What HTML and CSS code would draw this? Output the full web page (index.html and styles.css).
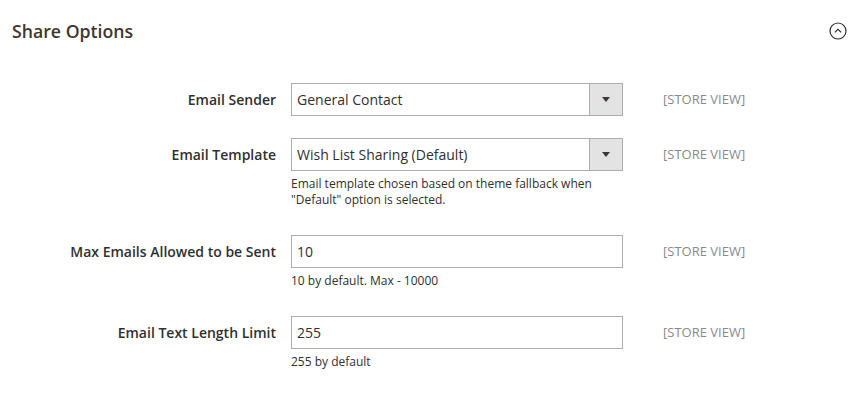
FILE: index.html
```html
<!DOCTYPE html>
<html lang="en">
<head>
    <meta charset="UTF-8">
    <title>Share Options</title>
    <link rel="stylesheet" href="styles.css">
</head>
<body>
    <div class="section">
        <div class="section-title">
            <span>Share Options</span>
            <svg class="toggle" width="18" height="18" viewBox="0 0 18 18">
                <circle cx="9" cy="9" r="8" fill="none" stroke="#303030" stroke-width="1.2"/>
                <path d="M5.8 10.4 L9 7.4 L12.2 10.4" fill="none" stroke="#303030" stroke-width="1.2"/>
            </svg>
        </div>

        <div class="fields">
            <div class="field">
                <label class="label">Email Sender</label>
                <div class="control">
                    <div class="select">
                        <span>General Contact</span>
                        <span class="select-btn"><i class="arrow"></i></span>
                    </div>
                </div>
                <div class="scope">[STORE VIEW]</div>
            </div>

            <div class="field">
                <label class="label">Email Template</label>
                <div class="control">
                    <div class="select">
                        <span>Wish List Sharing (Default)</span>
                        <span class="select-btn"><i class="arrow"></i></span>
                    </div>
                    <div class="note">Email template chosen based on theme fallback when "Default" option is selected.</div>
                </div>
                <div class="scope">[STORE VIEW]</div>
            </div>

            <div class="field">
                <label class="label">Max Emails Allowed to be Sent</label>
                <div class="control">
                    <input type="text" class="input" value="10">
                    <div class="note">10 by default. Max - 10000</div>
                </div>
                <div class="scope">[STORE VIEW]</div>
            </div>

            <div class="field">
                <label class="label">Email Text Length Limit</label>
                <div class="control">
                    <input type="text" class="input" value="255">
                    <div class="note">255 by default</div>
                </div>
                <div class="scope">[STORE VIEW]</div>
            </div>
        </div>
    </div>
</body>
</html>
```

FILE: styles.css
```css
body {
    margin: 0;
    background: #fff;
    font-family: "Open Sans", "Liberation Sans", sans-serif;
    color: #303030;
}
.section-title {
    display: flex;
    justify-content: space-between;
    align-items: center;
    height: 62px;
    padding: 0 18px 0 12px;
    font-size: 17.7px;
    font-weight: 600;
    color: #41362f;
}
.toggle {
    display: block;
}
.fields {
    margin-top: 21px;
}
.field {
    display: flex;
    align-items: flex-start;
    margin-bottom: 22px;
}
.label {
    width: 276px;
    text-align: right;
    font-size: 14px;
    font-weight: 600;
    line-height: 33px;
    padding-right: 15px;
}
.control {
    width: 332px;
}
.select, .input {
    box-sizing: border-box;
    width: 332px;
    height: 33px;
    border: 1px solid #adadad;
    background: #fff;
    font-family: inherit;
    font-size: 14px;
    color: #303030;
}
.select {
    display: flex;
    align-items: center;
    justify-content: space-between;
    padding-left: 5px;
}
.input {
    display: block;
    padding: 0 5px;
    outline: none;
}
.select-btn {
    width: 32px;
    height: 31px;
    border-left: 1px solid #adadad;
    background: #e3e3e3;
    display: flex;
    align-items: center;
    justify-content: center;
}
.arrow {
    width: 0;
    height: 0;
    border-left: 4px solid transparent;
    border-right: 4px solid transparent;
    border-top: 5px solid #41362f;
}
.note {
    font-size: 12px;
    line-height: 16px;
    margin: 5px 0;
    padding-right: 20px;
}
.scope {
    margin-left: 40px;
    font-size: 13px;
    line-height: 33px;
    color: #8a8a8a;
    text-transform: uppercase;
}
```
